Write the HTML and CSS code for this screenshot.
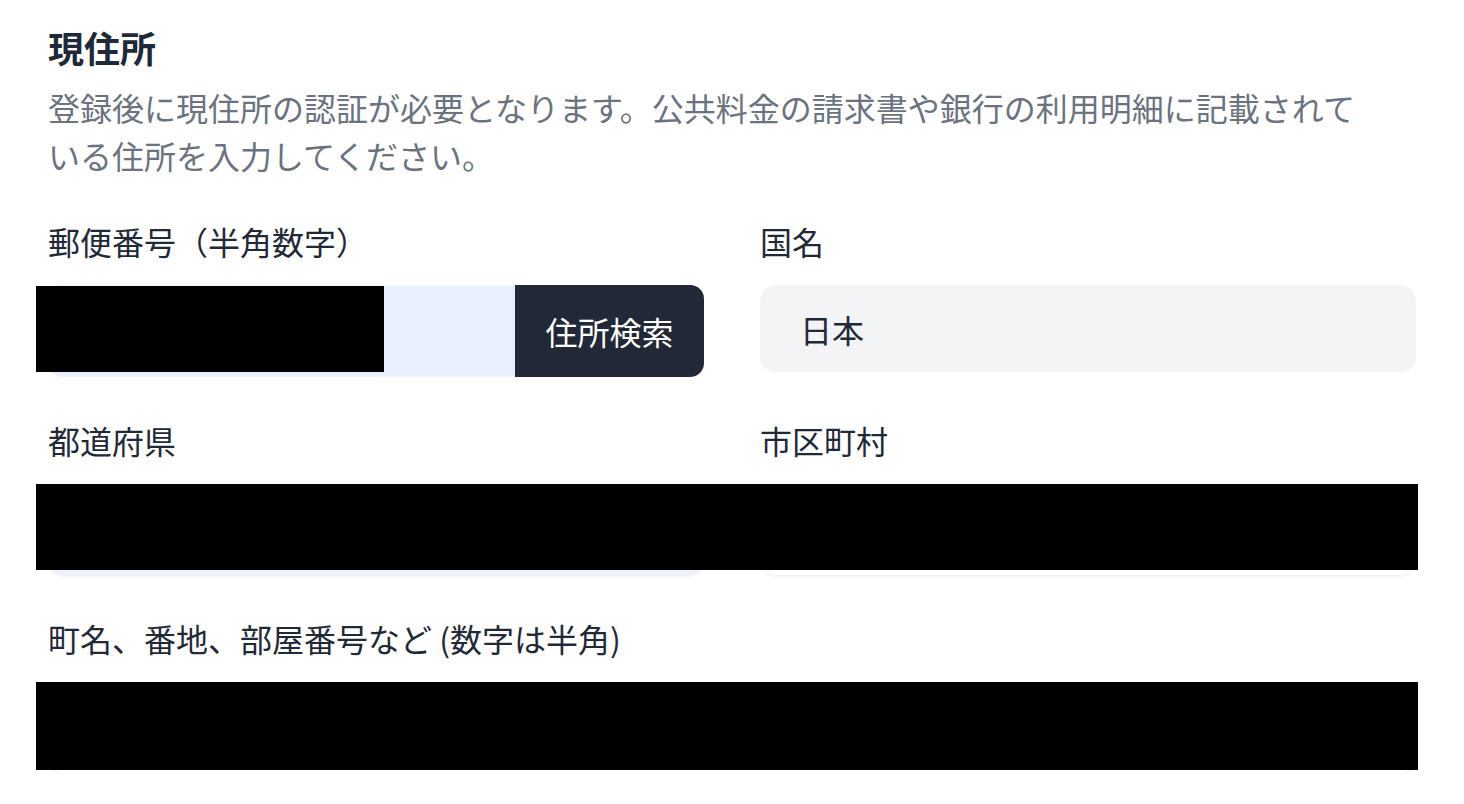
FILE: index.html
```html
<!DOCTYPE html>
<html lang="ja">
<head>
<meta charset="utf-8">
<title>現住所</title>
<link rel="stylesheet" href="styles.css">
</head>
<body>
<main class="page">
  <h2 class="title">現住所</h2>
  <p class="desc">登録後に現住所の認証が必要となります。公共料金の請求書や銀行の利用明細に記載されている住所を入力してください。</p>

  <div class="grid">
    <div class="field">
      <label class="label">郵便番号（半角数字）</label>
      <div class="postal">
        <div class="input input-autofill postal-input">
          <span class="redact redact-postal"></span>
        </div>
        <button class="search-btn" type="button">住所検索</button>
      </div>
    </div>
    <div class="field">
      <label class="label">国名</label>
      <div class="input input-readonly">日本</div>
    </div>

    <div class="field">
      <label class="label">都道府県</label>
      <div class="input input-autofill-soft tall">
        <span class="redact redact-wide"></span>
      </div>
    </div>
    <div class="field">
      <label class="label">市区町村</label>
      <div class="input tall"></div>
    </div>

    <div class="field span2">
      <label class="label">町名、番地、部屋番号など (数字は半角)</label>
      <div class="input tall">
        <span class="redact redact-full"></span>
      </div>
    </div>
  </div>
</main>
</body>
</html>
```

FILE: styles.css
```css
* { box-sizing: border-box; }

html, body {
  margin: 0;
  background: #ffffff;
}

body {
  font-family: "Noto Sans CJK JP", "Noto Sans", sans-serif;
  color: #1f2937;
}

.page {
  width: 1416px;
  padding: 20px 0 0 48px;
}

.title {
  margin: 0;
  font-size: 36px;
  line-height: 54px;
  font-weight: 700;
  color: #1f2937;
}

.desc {
  margin: 9px 0 0;
  max-width: 1330px;
  font-size: 32px;
  line-height: 48px;
  color: #6b7280;
}

.grid {
  margin-top: 38px;
  display: grid;
  grid-template-columns: 656px 656px;
  column-gap: 56px;
  row-gap: 39px;
  align-items: start;
}

.span2 { grid-column: 1 / 3; }

.field {
  display: flex;
  flex-direction: column;
}

.label {
  display: block;
  font-size: 32px;
  line-height: 48px;
  color: #1f2937;
  margin-bottom: 20px;
}

.input {
  position: relative;
  height: 87px;
  border-radius: 16px;
  background: #ffffff;
  box-shadow: 0 2px 3px rgba(17, 24, 39, 0.06);
  display: flex;
  align-items: center;
  padding-left: 40px;
  font-size: 32px;
  color: #1f2937;
}

.tall { height: 91px; }

.input-readonly {
  background: #f3f4f6;
  box-shadow: none;
}

.input-autofill-soft {
  background: #edf2fc;
}

.postal {
  display: flex;
  height: 92px;
}

.postal-input {
  flex: 1;
  height: 92px;
  border-radius: 14px 0 0 14px;
  background: #e8f0fe;
  border-top: 1px solid #f1f4f9;
  border-bottom: 1px solid #f1f4f9;
  box-shadow: none;
}

.search-btn {
  width: 189px;
  height: 92px;
  border: none;
  margin: 0;
  padding: 0;
  border-radius: 0 14px 14px 0;
  background: #222836;
  color: #ffffff;
  font-family: "Noto Sans CJK JP", "Noto Sans", sans-serif;
  font-size: 32px;
  font-weight: 400;
}

/* redaction blocks lying over the inputs */
.redact {
  position: absolute;
  z-index: 2;
  background: #000000;
  left: -12px;
  top: 0;
}

.redact-postal {
  width: 348px;
  height: 86px;
  top: 0;
}

.redact-wide {
  width: 1382px;
  height: 86px;
}

.redact-full {
  width: 1382px;
  height: 88px;
  top: 0;
}
```
